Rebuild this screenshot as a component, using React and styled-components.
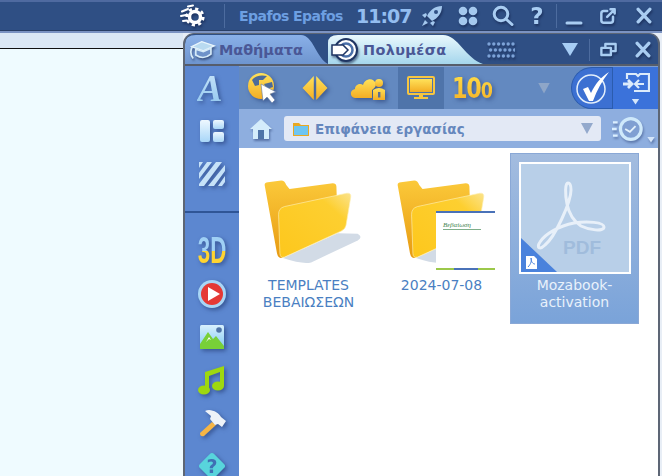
import styled, { createGlobalStyle } from "styled-components";

const GlobalStyle = createGlobalStyle`
  html, body { margin: 0; padding: 0; background: #e8eef6; }
  body { font-family: "DejaVu Sans", sans-serif; }
  * { box-sizing: border-box; }
`;

const Page = styled.div`
  width: 662px;
  height: 476px;
  overflow: hidden;
  display: flex;
  flex-direction: column;
`;

const TopBar = styled.div`
  height: 33px;
  flex: none;
  display: flex;
  align-items: center;
  justify-content: flex-end;
  padding: 0 6px 2px 0;
  background: #2f4f84;
  border-top: 2px solid #4f6aa0;
  border-bottom: 2px solid #7c93c2;
  box-shadow: inset 0 -1px 0 #2a3f66;
`;

const Slot = styled.div`
  width: ${(p) => p.$w || 24}px;
  height: 24px;
  margin-left: ${(p) => p.$ml || 0}px;
  flex: none;
  display: flex;
  align-items: center;
  justify-content: center;
  filter: drop-shadow(1px 2px 1px rgba(15, 30, 70, 0.55));
`;

const Rule = styled.div`
  width: 1px;
  height: ${(p) => p.$h || 24}px;
  margin-left: ${(p) => p.$ml || 0}px;
  flex: none;
  background: #4d6c9f;
`;

const UserName = styled.div`
  width: 104px;
  margin-left: 14px;
  flex: none;
  white-space: nowrap;
  font: bold 14px "DejaVu Sans", sans-serif;
  letter-spacing: -0.55px;
  color: #6d9fe2;
`;

const Clock = styled.div`
  width: 54px;
  margin-left: 13px;
  flex: none;
  white-space: nowrap;
  font: bold 19px "DejaVu Sans", sans-serif;
  letter-spacing: -1px;
  color: #93bdf0;
`;

const Help = styled.span`
  font: bold 23px "DejaVu Sans", sans-serif;
  color: #a9cdf2;
`;

const Workspace = styled.div`
  flex: 1;
  display: flex;
  min-height: 0;
`;

const LeftPane = styled.div`
  width: 183px;
  flex: none;
  background: #effbff;
`;

const LeftStrip = styled.div`
  height: 16px;
  background: #dce8f5;
  border-bottom: 1px solid #111;
`;

const Panel = styled.div`
  width: 477px;
  flex: none;
  display: flex;
  flex-direction: column;
  background: #2f4f84;
  border: 2px solid #5d6675;
  border-top-width: 1px;
  border-bottom: none;
  border-radius: 11px 11px 0 0;
  overflow: hidden;
`;

const TabRow = styled.div`
  height: 32px;
  flex: none;
  display: flex;
  align-items: flex-end;
  border-bottom: 2px solid #565d6b;
`;

const Tab = styled.div`
  width: ${(p) => p.$w}px;
  height: 29px;
  flex: none;
  display: flex;
  align-items: center;
  gap: ${(p) => (p.$active ? 2 : 3)}px;
  padding-left: ${(p) => (p.$active ? 3 : 4)}px;
  clip-path: ${(p) =>
    p.$active
      ? `path("M0 29 V8 Q0 0 10 0 H115 C130 0 138 24 155 29 Z")`
      : `path("M0 29 V9 Q0 0 11 0 H116 C128 0 132 24 143 29 Z")`};
  background: ${(p) =>
    p.$active
      ? "linear-gradient(180deg, #e9f8fd, #a5d6ec)"
      : "linear-gradient(180deg, #8ab0e8, #6e95cf)"};
`;

const TabLabel = styled.span`
  font: bold 14.4px "DejaVu Sans", sans-serif;
  letter-spacing: ${(p) => (p.$active ? 0.4 : 0)}px;
  white-space: nowrap;
  color: #4a5796;
`;

const TabTools = styled.div`
  flex: 1;
  height: 29px;
  display: flex;
  align-items: center;
`;

const Body = styled.div`
  flex: 1;
  display: flex;
  min-height: 0;
`;

const Sidebar = styled.div`
  width: 54px;
  flex: none;
  display: flex;
  flex-direction: column;
  background: #5c87d0;
`;

const SideItem = styled.div`
  height: 43px;
  flex: none;
  display: flex;
  align-items: center;
  justify-content: center;
  filter: drop-shadow(2px 2px 2px rgba(25, 45, 100, 0.55));
`;

const SideDivider = styled.div`
  height: 2px;
  flex: none;
  margin: 16px 0;
  background: #2f5596;
`;

const LetterA = styled.span`
  font: italic bold 38px "Liberation Serif", serif;
  background: linear-gradient(180deg, #cfe8fb, #8cc4ee);
  -webkit-background-clip: text;
  background-clip: text;
  color: transparent;
  padding-right: 4px;
`;

const ThreeD = styled.span`
  font: bold 36px/36px "Liberation Sans", sans-serif;
  transform: scaleX(0.62);
  background: linear-gradient(180deg, #9fd0f5 0 50%, #ffd430 50% 100%);
  -webkit-background-clip: text;
  background-clip: text;
  color: transparent;
`;

const Main = styled.div`
  flex: 1;
  min-width: 0;
  display: flex;
  flex-direction: column;
`;

const Toolbar = styled.div`
  height: 43px;
  flex: none;
  display: flex;
  background: #6389c0;
  border-top: 1px solid #7f9dcc;
`;

const ToolItem = styled.div`
  width: ${(p) => p.$w || 48}px;
  margin-left: ${(p) => p.$ml || 0}px;
  flex: none;
  display: flex;
  align-items: center;
  justify-content: center;
  background: ${(p) => (p.$selected ? "#4f74aa" : "transparent")};
  filter: ${(p) =>
    p.$selected ? "none" : "drop-shadow(2px 2px 2px rgba(25, 45, 100, 0.5))"};
`;

const Score = styled.span`
  font: bold 28px "DejaVu Sans", sans-serif;
  letter-spacing: -1.5px;
  white-space: nowrap;
  transform: scaleX(0.8);
  background: linear-gradient(180deg, #ffe04a, #f4ad25);
  -webkit-background-clip: text;
  background-clip: text;
  color: transparent;
`;

const SmallZero = styled.span`
  font-size: 22px;
`;

const MutedArrow = styled.div`
  width: ${(p) => p.$w || 12}px;
  height: ${(p) => p.$h || 11}px;
  margin-left: ${(p) => p.$ml || 0}px;
  align-self: center;
  flex: none;
  clip-path: polygon(0 0, 100% 0, 50% 100%);
  background: ${(p) => p.$color || "#8ea6c8"};
`;

const CheckButton = styled.div`
  width: 41px;
  margin-left: auto;
  flex: none;
  display: flex;
  align-items: center;
  justify-content: flex-end;
  padding-right: 2px;
  background: #3c70d2;
  border: 1px solid #2b5cae;
  border-right: none;
  border-radius: 22px 0 0 22px;
`;

const ActionButton = styled.div`
  width: 46px;
  flex: none;
  display: flex;
  flex-direction: column;
  align-items: center;
  justify-content: center;
  gap: 3px;
  background: #3b72da;
  border-left: 1px solid #2b5cae;
`;

const TinyArrow = styled.div`
  width: 8px;
  height: 6px;
  flex: none;
  clip-path: polygon(0 0, 100% 0, 50% 100%);
  background: ${(p) => p.$color || "#d5e6fa"};
`;

const PathBar = styled.div`
  height: 39px;
  flex: none;
  display: flex;
  align-items: center;
  padding-left: 7px;
  background: #8eaedf;
`;

const PathIcon = styled.div`
  width: 30px;
  flex: none;
  display: flex;
  justify-content: center;
  filter: drop-shadow(1px 2px 1px rgba(25, 45, 100, 0.45));
`;

const PathField = styled.div`
  width: 317px;
  height: 25px;
  margin-left: 8px;
  flex: none;
  display: flex;
  align-items: center;
  gap: 5px;
  padding: 0 8px;
  background: #e3e9f5;
  border-radius: 3px;
`;

const PathText = styled.span`
  flex: 1;
  font: bold 13.5px "DejaVu Sans", sans-serif;
  white-space: nowrap;
  color: #6587bd;
`;

const HistoryButton = styled.div`
  position: relative;
  width: 48px;
  margin-left: 6px;
  flex: none;
  display: flex;
  padding-left: 5px;
  filter: drop-shadow(1px 2px 1px rgba(25, 45, 100, 0.4));
`;

const CornerArrow = styled.div`
  position: absolute;
  right: 0;
  bottom: 0;
`;

const FileGrid = styled.div`
  flex: 1;
  display: grid;
  grid-template-columns: repeat(3, 129px);
  grid-auto-rows: 171px;
  column-gap: 4px;
  padding: 5px;
  background: #fff;
`;

const Tile = styled.div`
  display: flex;
  flex-direction: column;
  align-items: center;
  padding-top: 8px;
  border: 1px solid ${(p) => (p.$selected ? "#8aa8d6" : "transparent")};
  background: ${(p) =>
    p.$selected ? "linear-gradient(180deg, #a3bcdf, #7aa3d9)" : "transparent"};
`;

const Preview = styled.div`
  position: relative;
  width: 113px;
  height: 112px;
  flex: none;
  display: flex;
  align-items: center;
  justify-content: center;
  padding-top: ${(p) => (p.$flat ? 0 : 6)}px;
`;

const PdfFrame = styled.div`
  width: 112px;
  height: 112px;
  flex: none;
  border: 2px solid #fff;
  background: #b8cfe8;
`;

const MiniShot = styled.div`
  position: absolute;
  left: 51px;
  top: 49px;
  width: 59px;
  height: 59px;
  display: flex;
  flex-direction: column;
  background: #fff;
  border-top: 2px solid #4a72b8;
  padding-top: 8px;
`;

const MiniTitle = styled.div`
  margin-left: 7px;
  width: 38px;
  border-bottom: 1px solid #7fae8a;
  font: italic 7px "Liberation Serif", serif;
  white-space: nowrap;
  color: #3f8450;
`;

const MiniFooter = styled.div`
  margin-top: auto;
  height: 2px;
  background: linear-gradient(90deg, #9cc84a 0 30%, #4a72b8 30% 72%, #9cc84a 72% 100%);
`;

const FileLabel = styled.div`
  margin-top: 3px;
  text-align: center;
  font: 14px/17px "DejaVu Sans", sans-serif;
  color: ${(p) => (p.$selected ? "#e8f1fb" : "#4a7fc2")};
`;

const Stroke = ({ size = 24, children, color = "#a9cdf2", width = 3 }) => (
  <svg
    width={size}
    height={size}
    viewBox="0 0 24 24"
    fill="none"
    stroke={color}
    strokeWidth={width}
    strokeLinecap="round"
    strokeLinejoin="round"
  >
    {children}
  </svg>
);

const GearIcon = () => (
  <svg width="26" height="24" viewBox="0 0 26 24">
    <circle cx="15" cy="13" r="5.5" fill="none" stroke="#fff" strokeWidth="3.5" />
    <circle cx="15" cy="13" r="8.3" fill="none" stroke="#fff" strokeWidth="2.6" strokeDasharray="3.2 3.3" />
    <path d="M2 7.5 L8 5 M1 12 L6 11 M3 17 L7 16.5 M8 2.5 L13 1.5" stroke="#fff" strokeWidth="2" strokeLinecap="round" />
  </svg>
);

const RocketIcon = () => (
  <svg width="24" height="24" viewBox="0 0 24 24" fill="#a4c8ee">
    <path d="M22 2 C15 2 10 6 7 12 L12 17 C18 14 22 9 22 2 Z" />
    <path d="M6 9 L2 11 L5 14 L7 11 Z M15 18 L13 22 L10 19 L13 17 Z" />
    <path d="M5 16 L2 22 L8 19 Z" />
    <circle cx="16" cy="8" r="2" fill="#2f4f84" />
  </svg>
);

const DotsIcon = () => (
  <svg width="22" height="22" viewBox="0 0 22 22" fill="#a4c8ee">
    <circle cx="6" cy="6" r="4.3" />
    <circle cx="16" cy="6" r="4.3" />
    <circle cx="6" cy="16" r="4.3" />
    <circle cx="16" cy="16" r="4.3" />
  </svg>
);

const SearchIcon = () => (
  <Stroke>
    <circle cx="10" cy="10" r="6.8" />
    <path d="M15.5 15.5 L21 20.5" />
  </Stroke>
);

const MinusIcon = () => (
  <Stroke>
    <path d="M5 19 H19" />
  </Stroke>
);

const ExternalIcon = () => (
  <Stroke size={20}>
    <path d="M11 6 H7 Q4 6 4 9 V17 Q4 20 7 20 H15 Q18 20 18 17 V13" />
    <path d="M11 13 L20 4 M15 4 H20 V9" />
  </Stroke>
);

const CloseIcon = () => (
  <Stroke size={20} width={4}>
    <path d="M5 4 L19 19 M19 4 L5 19" />
  </Stroke>
);

const RestoreIcon = () => (
  <Stroke size={19} width={3}>
    <rect x="3" y="10" width="12" height="9" />
    <path d="M8 9 V5 H21 V14 H17" />
  </Stroke>
);

const CapIcon = () => (
  <svg width="27" height="22" viewBox="0 0 32 24">
    <path d="M15 2 L30 7 L17 13 L3 8 Z" fill="#b9daf0" stroke="#e9f5fc" strokeWidth="1.5" />
    <path d="M8 11 V18 C14 22 20 22 26 17 V10 L17 14 Z" fill="#6e92c9" stroke="#d6ebf8" strokeWidth="2" />
    <path d="M4 8 C1 13 2 18 5 22" fill="none" stroke="#d6ebf8" strokeWidth="2" />
  </svg>
);

const MediaIcon = () => (
  <svg width="30" height="26" viewBox="0 0 30 26">
    <circle cx="15" cy="13" r="11" fill="#fff" stroke="#1f3563" strokeWidth="2" />
    <circle cx="15" cy="13" r="6.5" fill="none" stroke="#4a6fa8" strokeWidth="2.5" />
    <path d="M1 8 H12 L17 13 L12 18 H1 Z" fill="#fff" stroke="#1f3563" strokeWidth="1.5" />
  </svg>
);

const GridDots = () => (
  <svg width="28" height="16" viewBox="0 0 28 16" fill="#7da3d8">
    {[0, 1, 2].map((row) =>
      [0, 1, 2, 3, 4, 5].map((col) => (
        <circle key={`${row}-${col}`} cx={2 + col * 4.8 + (row === 1 ? 1.6 : 0)} cy={2 + row * 6} r="1.7" />
      ))
    )}
  </svg>
);

const YellowDefs = ({ id }) => (
  <defs>
    <linearGradient id={id} x1="0" y1="0" x2="0" y2="1">
      <stop offset="0" stopColor="#ffe25a" />
      <stop offset="1" stopColor="#f3ad24" />
    </linearGradient>
  </defs>
);

const GlobeIcon = () => (
  <svg width="32" height="32" viewBox="0 0 32 32">
    <YellowDefs id="globeFill" />
    <circle cx="14" cy="14" r="13" fill="url(#globeFill)" />
    <path d="M5 8 C9 3 15 3 20 4 L16 8 L12 8 L12 13 L8 14 Z M17 12 L25 10 L26 15 L20 17 Z" fill="#4c6b9a" />
    <path d="M14 12 L29 20 L23 22 L28 28 L25 31 L20 25 L16 29 Z" fill="#fff" stroke="#5a76a2" strokeWidth="0.6" />
  </svg>
);

const DiamondIcon = () => (
  <svg width="26" height="26" viewBox="0 0 26 26">
    <YellowDefs id="diamondFill" />
    <path d="M11.8 1 V25 L0.5 13 Z M14.2 1 V25 L25.5 13 Z" fill="url(#diamondFill)" />
  </svg>
);

const CloudLockIcon = () => (
  <svg width="36" height="26" viewBox="0 0 36 26">
    <YellowDefs id="cloudFill" />
    <path d="M5 23 C0 23 -1 15 5 14 C5 9 11 8 13 10 C15 3 24 2 26 9 C26 12 24 13 22 15 V23 Z" fill="url(#cloudFill)" />
    <circle cx="29" cy="8" r="4" fill="url(#cloudFill)" />
    <path d="M23 15 Q29 11 35 15 V25 H23 Z" fill="url(#cloudFill)" />
    <rect x="28" y="17" width="2.4" height="5.5" fill="#5c6f92" />
  </svg>
);

const MonitorIcon = () => (
  <svg width="28" height="26" viewBox="0 0 28 26">
    <YellowDefs id="screenFill" />
    <rect x="1" y="2" width="26" height="17" rx="1" fill="none" stroke="#f7c640" strokeWidth="2" />
    <rect x="3" y="4" width="22" height="13" fill="url(#screenFill)" />
    <path d="M12 19 H16 V22 H21 V24 H7 V22 H12 Z" fill="#f7c640" />
  </svg>
);

const BigCheck = () => (
  <svg width="36" height="36" viewBox="0 0 36 36">
    <circle cx="17" cy="19" r="14" fill="#3c70d2" stroke="#e2eefb" strokeWidth="1.5" />
    <path d="M9 19 L14 17 L17 23 C21 14 27 7 35 2 C28 11 23 20 19 31 L15 31 Z" fill="#fff" />
  </svg>
);

const TransferIcon = () => (
  <svg width="28" height="24" viewBox="0 0 28 24" fill="none" stroke="#dcebfb" strokeWidth="2.2">
    <path d="M5 7 V2 H14 L16 4 L18 2 H27 V19 H12" />
    <path d="M1 12 H9 M6 8 L10 12 L6 16" strokeWidth="2.8" />
    <path d="M13 12 H22 M17 8 L13 12 L17 16" />
  </svg>
);

const HomeIcon = () => (
  <svg width="24" height="22" viewBox="0 0 24 22">
    <path d="M12 1 L23 11 H20 V21 H4 V11 H1 Z" fill="#d4ecfb" />
    <rect x="9" y="12" width="6" height="9" fill="#4f74a8" />
  </svg>
);

const SmallFolder = () => (
  <svg width="18" height="16" viewBox="0 0 18 16" style={{ flex: "none" }}>
    <path d="M1 2 H7 L9 4 H17 V15 H1 Z" fill="#e8a823" />
    <rect x="2" y="5" width="14" height="9" fill="#6ec5f2" />
  </svg>
);

const HistoryIcon = () => (
  <svg width="32" height="28" viewBox="0 0 34 28">
    <path d="M1 7 H6 M0 14 H5 M1 21 H6" stroke="#dcefff" strokeWidth="2.4" />
    <circle cx="20" cy="14" r="11" fill="#7f9fd2" stroke="#cfe9fb" strokeWidth="3.4" />
    <path d="M14 14 L19 17 L25 11" fill="none" stroke="#e2f0fb" strokeWidth="2" />
  </svg>
);

const LayoutIcon = () => (
  <svg width="26" height="24" viewBox="0 0 26 24">
    <defs>
      <linearGradient id="paleFill" x1="0" y1="0" x2="0" y2="1">
        <stop offset="0" stopColor="#eef8ff" />
        <stop offset="1" stopColor="#a8d6f8" />
      </linearGradient>
    </defs>
    <rect x="1" y="1" width="10" height="22" rx="2" fill="url(#paleFill)" />
    <rect x="14" y="1" width="11" height="9" rx="2" fill="url(#paleFill)" />
    <rect x="14" y="13" width="11" height="10" rx="2" fill="url(#paleFill)" />
  </svg>
);

const HatchIcon = () => (
  <svg width="26" height="24" viewBox="0 0 26 24">
    <path d="M0 0 H4 L0 6 Z M8 0 H13 L0 17 V11 Z M17 0 H23 L5 24 H0 V22 Z M26 3 V9 L15 24 H9 Z M26 14 V20 L23 24 H19 Z" fill="#c6e2f8" />
  </svg>
);

const PlayIcon = () => (
  <svg width="30" height="30" viewBox="0 0 30 30">
    <circle cx="15" cy="15" r="14" fill="#a8d6f6" />
    <circle cx="15" cy="15" r="11" fill="#e53935" />
    <path d="M11 8 L23 15 L11 22 Z" fill="#fff" />
  </svg>
);

const PictureIcon = () => (
  <svg width="26" height="26" viewBox="0 0 26 26">
    <defs>
      <linearGradient id="skyFill" x1="0" y1="0" x2="0" y2="1">
        <stop offset="0" stopColor="#d8f0fd" />
        <stop offset="1" stopColor="#7fc8f2" />
      </linearGradient>
    </defs>
    <rect x="1" y="1" width="24" height="24" rx="1.5" fill="url(#skyFill)" />
    <circle cx="20" cy="6" r="2.8" fill="#4f74a8" />
    <path d="M1 25 V20 L9 8 L14 15 L17 12 L25 22 V25 Z" fill="#78d038" />
    <path d="M7 18 L10 13 L12 16 L10 15 Z" fill="#fff" />
  </svg>
);

const MusicIcon = () => (
  <svg width="28" height="30" viewBox="0 0 28 30" fill="#9ed80f">
    <path d="M7 7 L26 1 V21 H22 V7 L11 11 V25 H7 Z" />
    <ellipse cx="6" cy="25" rx="6" ry="4.6" />
    <ellipse cx="20" cy="21" rx="6" ry="4.6" />
  </svg>
);

const HammerIcon = () => (
  <svg width="30" height="30" viewBox="0 0 30 30">
    <path d="M15 14 L3 25 Q3 29 7 28 L19 17 Z" fill="#f6b545" />
    <path d="M8 3 C14 0 22 5 24 9 L29 13 L25 19 L21 16 L18 17 L13 11 L14 8 C12 6 10 5 8 3 Z" fill="#eef3f8" />
  </svg>
);

const QuestionIcon = () => (
  <svg width="32" height="32" viewBox="0 0 32 32">
    <rect x="6" y="6" width="20" height="20" rx="3" transform="rotate(45 16 16)" fill="#58d4dc" />
    <text x="16" y="23" textAnchor="middle" fontFamily="DejaVu Sans" fontWeight="bold" fontSize="19" fill="#3f6fb4">?</text>
  </svg>
);

const FolderArt = () => (
  <svg width="113" height="87" viewBox="37 85 340 260">
    <defs>
      <linearGradient id="folderBack" x1="0" y1="0" x2="0" y2="1">
        <stop offset="0" stopColor="#fbc93a" />
        <stop offset="1" stopColor="#e79a12" />
      </linearGradient>
      <linearGradient id="folderFront" x1="0" y1="1" x2="1" y2="0">
        <stop offset="0" stopColor="#fdc71c" />
        <stop offset="0.75" stopColor="#fdcf30" />
        <stop offset="1" stopColor="#fbe38c" />
      </linearGradient>
    </defs>
    <path d="M130 325 L295 250 L355 252 Q372 262 355 272 L215 338 Q190 345 130 325 Z" fill="#d2dbe6" />
    <path d="M75 105 Q75 98 85 97 L125 92 Q135 92 140 105 L150 117 L280 100 Q290 100 291 110 L295 240 L125 325 Q115 325 112 310 Z" fill="url(#folderBack)" />
    <path d="M117 195 Q116 175 135 170 L322 130 Q336 128 334 142 L320 226 Q318 238 305 244 L135 322 Q122 326 121 312 Z" fill="url(#folderFront)" stroke="#fdeeb0" strokeWidth="2" />
  </svg>
);

const PdfArt = () => (
  <svg width="108" height="108" viewBox="0 0 108 108" style={{ display: "block" }}>
    <path
      d="M47 19 C44 19 44 30 46 40 C48 50 54 58 60 62 C68 66 83 68 83 63 C83 58 66 57 53 59 C38 62 24 70 19 78 C15 84 19 86 24 81 C34 73 50 38 50 26 C50 21 49 19 47 19 Z"
      fill="none"
      stroke="#e8f0f9"
      strokeWidth="3"
    />
    <text x="42" y="90" fontFamily="Liberation Sans" fontWeight="bold" fontSize="19" fill="#a0bcdc">PDF</text>
    <path d="M0 74 L36 108 H0 Z" fill="#4a82dc" />
    <path d="M5 92 H13 L16 95 V105 H5 Z" fill="#fff" />
    <path d="M7 103 C10 100 11 96 10 94 C10 98 12 100 14 100" fill="none" stroke="#4a82dc" strokeWidth="1" />
  </svg>
);

function App() {
  const name = "Epafos Epafos";
  return (
    <Page>
      <GlobalStyle />
      <TopBar>
        <Slot $w={26}><GearIcon /></Slot>
        <Rule $ml={18} />
        <UserName>{name}</UserName>
        <Clock>11:07</Clock>
        <Slot $ml={10}><RocketIcon /></Slot>
        <Slot $ml={12}><DotsIcon /></Slot>
        <Slot $ml={11}><SearchIcon /></Slot>
        <Slot $ml={10}><Help>?</Help></Slot>
        <Rule $ml={7} />
        <Slot $ml={5}><MinusIcon /></Slot>
        <Slot $ml={10}><ExternalIcon /></Slot>
        <Slot $ml={12}><CloseIcon /></Slot>
      </TopBar>
      <Workspace>
        <LeftPane>
          <LeftStrip />
        </LeftPane>
        <Panel>
          <TabRow>
            <Tab $w={143}>
              <Slot $w={27}><CapIcon /></Slot>
              <TabLabel>Μαθήματα</TabLabel>
            </Tab>
            <Tab $w={155} $active>
              <Slot $w={30}><MediaIcon /></Slot>
              <TabLabel $active>Πολυμέσα</TabLabel>
            </Tab>
            <TabTools>
              <Slot $w={28} $ml={4}><GridDots /></Slot>
              <MutedArrow $ml={47} $w={16} $h={13} $color="#a6cdf5" />
              <Rule $ml={11} $h={22} />
              <Slot $ml={6}><RestoreIcon /></Slot>
              <Slot $ml={11}><CloseIcon /></Slot>
            </TabTools>
          </TabRow>
          <Body>
            <Sidebar>
              <SideItem><LetterA>A</LetterA></SideItem>
              <SideItem><LayoutIcon /></SideItem>
              <SideItem><HatchIcon /></SideItem>
              <SideDivider />
              <SideItem><ThreeD>3D</ThreeD></SideItem>
              <SideItem><PlayIcon /></SideItem>
              <SideItem><PictureIcon /></SideItem>
              <SideItem><MusicIcon /></SideItem>
              <SideItem><HammerIcon /></SideItem>
              <SideItem><QuestionIcon /></SideItem>
            </Sidebar>
            <Main>
              <Toolbar>
                <ToolItem><GlobeIcon /></ToolItem>
                <ToolItem $ml={4}><DiamondIcon /></ToolItem>
                <ToolItem $ml={5}><CloudLockIcon /></ToolItem>
                <ToolItem $ml={6} $w={46} $selected><MonitorIcon /></ToolItem>
                <ToolItem $ml={8} $w={40}><Score>10<SmallZero>0</SmallZero></Score></ToolItem>
                <MutedArrow $ml={46} />
                <CheckButton><BigCheck /></CheckButton>
                <ActionButton>
                  <TransferIcon />
                  <TinyArrow />
                </ActionButton>
              </Toolbar>
              <PathBar>
                <PathIcon><HomeIcon /></PathIcon>
                <PathField>
                  <SmallFolder />
                  <PathText>Επιφάνεια εργασίας</PathText>
                  <MutedArrow $color="#93a9cc" />
                </PathField>
                <HistoryButton>
                  <HistoryIcon />
                  <CornerArrow><TinyArrow /></CornerArrow>
                </HistoryButton>
              </PathBar>
              <FileGrid>
                <Tile>
                  <Preview><FolderArt /></Preview>
                  <FileLabel>TEMPLATES<br />ΒΕΒΑΙΩΣΕΩΝ</FileLabel>
                </Tile>
                <Tile>
                  <Preview>
                    <FolderArt />
                    <MiniShot>
                      <MiniTitle>Βεβαίωση</MiniTitle>
                      <MiniFooter />
                    </MiniShot>
                  </Preview>
                  <FileLabel>2024-07-08</FileLabel>
                </Tile>
                <Tile $selected>
                  <Preview $flat>
                    <PdfFrame><PdfArt /></PdfFrame>
                  </Preview>
                  <FileLabel $selected>Mozabook-<br />activation</FileLabel>
                </Tile>
              </FileGrid>
            </Main>
          </Body>
        </Panel>
      </Workspace>
    </Page>
  );
}

export default App;
